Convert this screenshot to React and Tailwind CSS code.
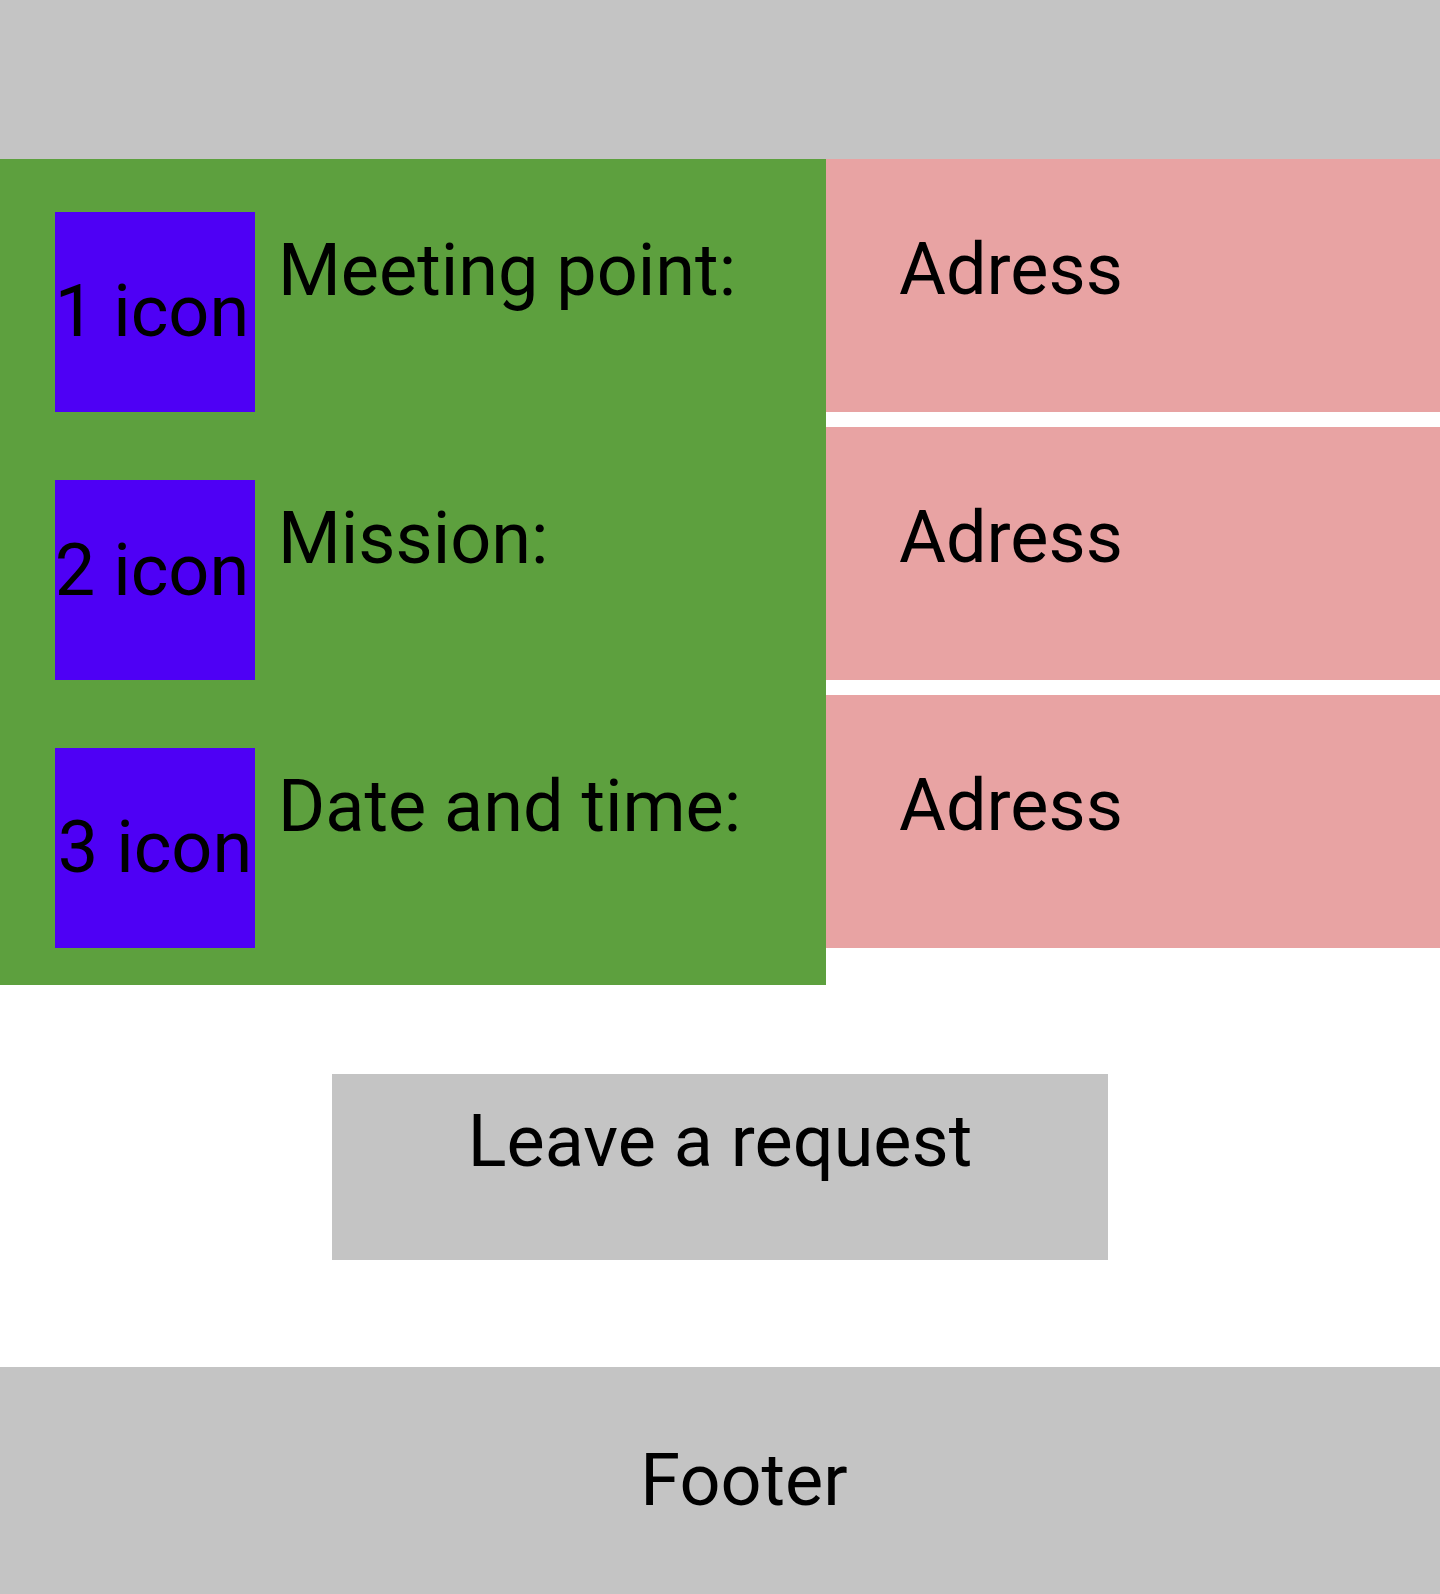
export default function App() {
  const rows = [
    { icon: "1 icon", label: "Meeting point:", iconPad: "pr-[6px]" },
    { icon: "2 icon", label: "Mission:", iconPad: "pb-[18px] pr-[6px]" },
    { icon: "3 icon", label: "Date and time:", iconPad: "" },
  ];

  return (
    <div className="min-h-screen bg-white text-black font-['Roboto',sans-serif] text-[72px] leading-[84px]">
      <header className="h-[159px] bg-[#c4c4c4]"></header>

      <section className="flex items-start">
        <div className="w-[826px] bg-[#5da03e] pt-[53px] pb-[37px] pl-[55px] flex flex-col gap-[68px]">
          {rows.map((row) => (
            <div key={row.icon} className="flex items-start">
              <div
                className={
                  "w-[200px] h-[200px] shrink-0 bg-[#4e00f5] flex items-center justify-center whitespace-nowrap " +
                  row.iconPad
                }
              >
                {row.icon}
              </div>
              <p className="ml-[23px] mt-[17px] whitespace-nowrap">{row.label}</p>
            </div>
          ))}
        </div>

        <div className="flex-1 flex flex-col gap-[15px]">
          {rows.map((row) => (
            <div key={row.icon} className="h-[253px] bg-[#e8a3a3] pl-[73px] pt-[69px]">
              Adress
            </div>
          ))}
        </div>
      </section>

      <div className="flex justify-center pt-[89px] pb-[107px]">
        <button className="w-[776px] h-[186px] bg-[#c4c4c4] pt-[26px] flex justify-center items-start">
          Leave a request
        </button>
      </div>

      <footer className="h-[227px] bg-[#c4c4c4] flex items-center justify-center pl-[48px]">
        Footer
      </footer>
    </div>
  );
}
